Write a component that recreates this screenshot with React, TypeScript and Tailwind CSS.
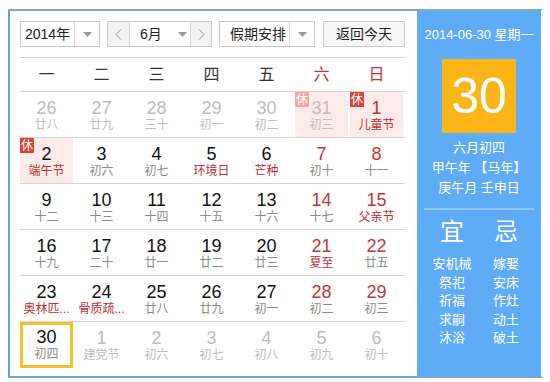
import React from 'react';

type Day = {
  n: number;
  lunar: string;
  other?: boolean;
  red?: boolean;
  fest?: boolean;
  rest?: boolean;
  today?: boolean;
};

const weekdays = ['一', '二', '三', '四', '五', '六', '日'];

const rows: Day[][] = [
  [
    { n: 26, lunar: '廿八', other: true },
    { n: 27, lunar: '廿九', other: true },
    { n: 28, lunar: '三十', other: true },
    { n: 29, lunar: '初一', other: true },
    { n: 30, lunar: '初二', other: true },
    { n: 31, lunar: '初三', other: true, rest: true },
    { n: 1, lunar: '儿童节', red: true, fest: true, rest: true },
  ],
  [
    { n: 2, lunar: '端午节', fest: true, rest: true },
    { n: 3, lunar: '初六' },
    { n: 4, lunar: '初七' },
    { n: 5, lunar: '环境日', fest: true },
    { n: 6, lunar: '芒种', fest: true },
    { n: 7, lunar: '初十', red: true },
    { n: 8, lunar: '十一', red: true },
  ],
  [
    { n: 9, lunar: '十二' },
    { n: 10, lunar: '十三' },
    { n: 11, lunar: '十四' },
    { n: 12, lunar: '十五' },
    { n: 13, lunar: '十六' },
    { n: 14, lunar: '十七', red: true },
    { n: 15, lunar: '父亲节', red: true, fest: true },
  ],
  [
    { n: 16, lunar: '十九' },
    { n: 17, lunar: '二十' },
    { n: 18, lunar: '廿一' },
    { n: 19, lunar: '廿二' },
    { n: 20, lunar: '廿三' },
    { n: 21, lunar: '夏至', red: true, fest: true },
    { n: 22, lunar: '廿五', red: true },
  ],
  [
    { n: 23, lunar: '奥林匹...', fest: true },
    { n: 24, lunar: '骨质疏...', fest: true },
    { n: 25, lunar: '廿八' },
    { n: 26, lunar: '廿九' },
    { n: 27, lunar: '初一' },
    { n: 28, lunar: '初二', red: true },
    { n: 29, lunar: '初三', red: true },
  ],
  [
    { n: 30, lunar: '初四', today: true },
    { n: 1, lunar: '建党节', other: true },
    { n: 2, lunar: '初六', other: true },
    { n: 3, lunar: '初七', other: true },
    { n: 4, lunar: '初八', other: true },
    { n: 5, lunar: '初九', other: true },
    { n: 6, lunar: '初十', other: true },
  ],
];

const yi = ['安机械', '祭祀', '祈福', '求嗣', '沐浴'];
const ji = ['嫁娶', '安床', '作灶', '动土', '破土'];

function Caret() {
  return (
    <svg width="9" height="5" viewBox="0 0 9 5">
      <path d="M0 0 L9 0 L4.5 5 Z" fill="#9a9a9a" />
    </svg>
  );
}

function Chevron({ left }: { left?: boolean }) {
  return (
    <svg width="7" height="11" viewBox="0 0 7 11">
      <path
        d={left ? 'M6 0.5 L1 5.5 L6 10.5' : 'M1 0.5 L6 5.5 L1 10.5'}
        fill="none"
        stroke="#888"
        strokeWidth="1"
      />
    </svg>
  );
}

function Cell({ d }: { d: Day }) {
  const numColor = d.other ? 'text-[#bdbdbd]' : d.red ? 'text-[#c4343c]' : 'text-[#111]';
  const lunarColor = d.other ? 'text-[#bdbdbd]' : d.fest ? 'text-[#bb2f2f]' : 'text-[#8a8a8a]';
  return (
    <div className="pr-[2px] h-full">
      <div
        className={`relative h-full flex flex-col items-center ${d.rest ? 'bg-[#fdeaea]' : ''} ${
          d.today ? 'border-[3px] border-[#f4c02c] pt-[2px]' : 'pt-[6px]'
        }`}
      >
        {d.rest && (
          <span
            className={`absolute left-0 top-0 w-[14px] h-[15px] flex items-center justify-center text-[12px] leading-none text-white ${
              d.other ? 'bg-[#f0a9a4]' : 'bg-[#dc4636]'
            }`}
          >
            休
          </span>
        )}
        <span className={`text-[18px] leading-[20px] ${numColor}`}>{d.n}</span>
        <span className={`text-[12px] leading-[14px] whitespace-nowrap ${lunarColor}`}>{d.lunar}</span>
      </div>
    </div>
  );
}

export default function App() {
  return (
    <div
      className="w-[550px] h-[382px] bg-white pt-[9px] pl-[8px]"
      style={{ fontFamily: '"Liberation Sans", "Noto Sans CJK SC", sans-serif' }}
    >
      <div className="w-[535px] h-[369px] border-2 border-t-[#7ea8c8] border-l-[#5ea3e6] border-b-[#74a6cf] border-r-white flex">
        {/* 左侧日历 */}
        <div className="w-[407px] pl-[10px] pt-[10px]">
          {/* 顶部控件 */}
          <div className="flex h-[26px] text-[14px] text-[#222]">
            <div className="w-[80px] flex border border-[#c9c9c9] bg-white">
              <div className="flex-1 flex items-center justify-center">2014年</div>
              <div className="w-[25px] border-l border-[#d6d6d6] flex items-center justify-center">
                <Caret />
              </div>
            </div>
            <div className="ml-[7px] w-[105px] flex border border-[#c9c9c9] bg-white">
              <div className="w-[22px] bg-[#f3f3f3] border-r border-[#d6d6d6] flex items-center justify-center">
                <Chevron left />
              </div>
              <div className="flex-1 flex items-center pl-[10px]">
                <span>6月</span>
                <span className="ml-[16px] flex items-center">
                  <Caret />
                </span>
              </div>
              <div className="w-[21px] bg-[#f3f3f3] border-l border-[#d6d6d6] flex items-center justify-center">
                <Chevron />
              </div>
            </div>
            <div className="ml-[7px] w-[96px] flex border border-[#c9c9c9] bg-white">
              <div className="flex-1 flex items-center pl-[10px]">假期安排</div>
              <div className="w-[25px] border-l border-[#d6d6d6] flex items-center justify-center">
                <Caret />
              </div>
            </div>
            <div className="ml-[8px] w-[82px] border border-[#c9c9c9] bg-[#f6f6f6] flex items-center justify-center">
              返回今天
            </div>
          </div>

          {/* 日历表 */}
          <div className="mt-[10px] w-[385px]">
            <div className="grid grid-cols-7 h-[35px] border-t border-[#a9bfd3] border-b border-[#d4d4d4] items-center text-[16px]">
              {weekdays.map((w, i) => (
                <div key={w} className={`text-center pr-[2px] ${i >= 5 ? 'text-[#c4343c]' : 'text-[#333]'}`}>
                  {w}
                </div>
              ))}
            </div>
            {rows.map((r, ri) => (
              <div
                key={ri}
                className={`grid grid-cols-7 h-[46px] ${ri < rows.length - 1 ? 'border-b border-[#d4d4d4]' : ''}`}
              >
                {r.map((d, di) => (
                  <Cell key={di} d={d} />
                ))}
              </div>
            ))}
          </div>
        </div>

        {/* 右侧详情 */}
        <div className="flex-1 bg-[#5eabf6] text-white flex flex-col items-center pt-[14px]">
          <div className="text-[13px] leading-[20px] whitespace-nowrap">2014-06-30 星期一</div>
          <div className="mt-[14px] w-[74px] h-[74px] bg-[#fbb516] flex items-center justify-center text-[50px] leading-none">
            30
          </div>
          <div className="mt-[5px] text-[13px] leading-[20px] text-center">
            <div>六月初四</div>
            <div className="whitespace-nowrap">甲午年 【马年】</div>
            <div className="whitespace-nowrap">庚午月 壬申日</div>
          </div>
          <div className="mt-[10px] h-[2px] w-[110px] bg-[#90c6f8]" />
          <div className="mt-[8px] w-[108px] grid grid-cols-2 text-center">
            <div className="text-[24px] leading-[28px]">宜</div>
            <div className="text-[24px] leading-[28px]">忌</div>
            <div className="mt-[9px] text-[13px] leading-[18.5px]">
              {yi.map((t) => (
                <div key={t}>{t}</div>
              ))}
            </div>
            <div className="mt-[9px] text-[13px] leading-[18.5px]">
              {ji.map((t) => (
                <div key={t}>{t}</div>
              ))}
            </div>
          </div>
        </div>
      </div>
    </div>
  );
}
